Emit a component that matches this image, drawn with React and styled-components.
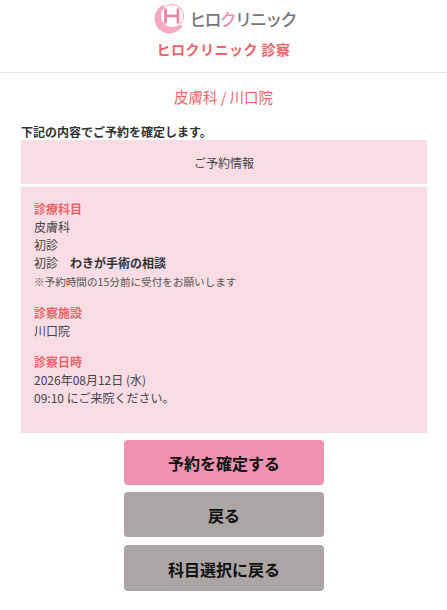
import React from "react";
import styled, { createGlobalStyle } from "styled-components";

const Global = createGlobalStyle`
  html, body {
    margin: 0;
    padding: 0;
    background: #fff;
    font-family: "Noto Sans CJK JP", "Noto Sans", sans-serif;
    color: #333;
  }
`;

const Header = styled.header`
  height: 72px;
  border-bottom: 1px solid #e6e6e6;
  display: flex;
  flex-direction: column;
  align-items: center;
`;

const Logo = styled.div`
  height: 37px;
  display: flex;
  align-items: center;
  gap: 5px;
  margin-left: 1px;
`;

const LogoText = styled.span`
  font-size: 17px;
  font-weight: 500;
  line-height: 37px;
  color: #77777a;
  letter-spacing: -1.8px;
  em {
    font-style: normal;
    color: #ee93b4;
  }
`;

const Title = styled.h1`
  margin: 0;
  font-size: 14px;
  line-height: 24px;
  font-weight: 700;
  color: #ea6468;
  letter-spacing: 0.5px;
`;

const SubHead = styled.h2`
  margin: 14px 0 0;
  font-size: 14.5px;
  line-height: 20px;
  font-weight: 400;
  color: #ea6468;
  text-align: center;
`;

const Main = styled.main`
  padding: 0 20px 0 21px;
`;

const Lead = styled.p`
  margin: 16px 0 0;
  font-size: 12px;
  line-height: 17px;
  font-weight: 700;
  color: #333;
`;

const PanelTitle = styled.div`
  height: 44px;
  background: #f9dce4;
  display: flex;
  align-items: center;
  justify-content: center;
  font-size: 12px;
  color: #444;
`;

const Panel = styled.section`
  margin-top: 3px;
  height: 246px;
  box-sizing: border-box;
  padding: 13px 13px;
  background: #f9dce4;
  font-size: 12px;
  line-height: 18px;
  color: #444;
`;

const Group = styled.div`
  margin-bottom: 13px;
`;

const Label = styled.div`
  color: #ea6468;
  font-weight: 700;
`;

const Note = styled.div`
  font-size: 10.6px;
  line-height: 19px;
  color: #555;
`;

const Strong = styled.strong`
  font-weight: 700;
  color: #333;
  margin-left: 12px;
`;

const Actions = styled.div`
  margin-top: 7px;
  display: flex;
  flex-direction: column;
  align-items: center;
`;

const Button = styled.button`
  width: 200px;
  height: ${(props) => props.$h || 45}px;
  margin-bottom: ${(props) => props.$gap || 7}px;
  border: 0;
  border-radius: 4px;
  background: ${(props) => (props.$primary ? "#ef92b2" : "#aba5a6")};
  color: #111;
  font-family: inherit;
  font-size: 16px;
  font-weight: 700;
  padding: 1px 0 0;
`;

function LogoMark() {
  return (
    <svg width="32" height="32" viewBox="0 0 32 32">
      <path
        d="M12 1.5A15 15 0 1 0 31 22 A17 17 0 0 1 12 1.5Z"
        fill="#f6a9c4"
      />
      <circle cx="20" cy="13" r="11.6" fill="#fff" stroke="#f6a5c1" strokeWidth="1" />
      <path
        d="M13.5 5.5V20.5M26 5.5V20.5M13.5 12.8H26"
        fill="none"
        stroke="#ef85aa"
        strokeWidth="2.8"
      />
    </svg>
  );
}

export default function App() {
  return (
    <>
      <Global />
      <Header>
        <Logo>
          <LogoMark />
          <LogoText>
            ヒロ<em>ク</em>リニック
          </LogoText>
        </Logo>
        <Title>ヒロクリニック 診察</Title>
      </Header>
      <SubHead>皮膚科 / 川口院</SubHead>
      <Main>
        <Lead>下記の内容でご予約を確定します。</Lead>
        <PanelTitle>ご予約情報</PanelTitle>
        <Panel>
          <Group>
            <Label>診療科目</Label>
            <div>皮膚科</div>
            <div>初診</div>
            <div>
              初診<Strong>わきが手術の相談</Strong>
            </div>
            <Note>※予約時間の15分前に受付をお願いします</Note>
          </Group>
          <Group>
            <Label>診察施設</Label>
            <div>川口院</div>
          </Group>
          <Group>
            <Label>診察日時</Label>
            <div>2026年08月12日 (水)</div>
            <div>09:10 にご来院ください。</div>
          </Group>
        </Panel>
        <Actions>
          <Button $primary>予約を確定する</Button>
          <Button $gap={8}>戻る</Button>
          <Button $h={46}>科目選択に戻る</Button>
        </Actions>
      </Main>
    </>
  );
}
